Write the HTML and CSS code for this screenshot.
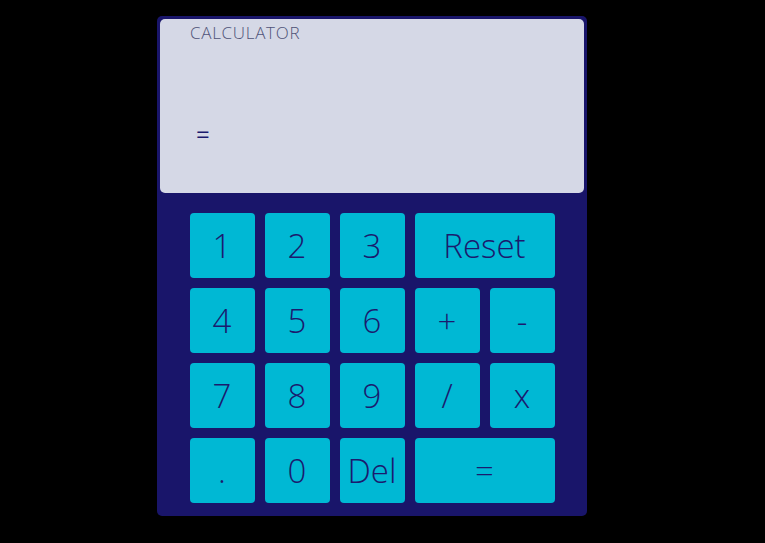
FILE: index.html
```html
<!DOCTYPE html>
<html>
<head>
<meta charset="utf-8">
<link rel="stylesheet" href="styles.css">
</head>
<body>
<div class="calc">
  <div class="display">
    <div class="title">CALCULATOR</div>
    <div class="result">=</div>
  </div>
  <div class="keys">
    <button class="key">1</button>
    <button class="key">2</button>
    <button class="key">3</button>
    <button class="key wide">Reset</button>
    <button class="key">4</button>
    <button class="key">5</button>
    <button class="key">6</button>
    <button class="key">+</button>
    <button class="key">-</button>
    <button class="key">7</button>
    <button class="key">8</button>
    <button class="key">9</button>
    <button class="key">/</button>
    <button class="key">x</button>
    <button class="key">.</button>
    <button class="key">0</button>
    <button class="key">Del</button>
    <button class="key wide">=</button>
  </div>
</div>
</body>
</html>
```
FILE: styles.css
```css
html, body {
  margin: 0;
  padding: 0;
  background: #000;
}
body {
  padding-top: 16px;
  font-family: "Open Sans", "DejaVu Sans", sans-serif;
}
.calc {
  width: 430px;
  margin-left: 157px;
  box-sizing: border-box;
  background: #19156a;
  border-radius: 5px;
  padding: 3px 3px 13px;
}
.display {
  height: 174px;
  box-sizing: border-box;
  background: #d5d8e6;
  border-radius: 5px;
  padding: 2px 30px;
}
.title {
  font-size: 17px;
  line-height: 24px;
  font-weight: 300;
  letter-spacing: 0.7px;
  color: #4f5378;
}
.result {
  margin-top: 74px;
  margin-left: 6px;
  font-size: 24px;
  line-height: 30px;
  color: #1b1a6e;
}
.keys {
  margin-top: 20px;
  display: grid;
  grid-template-columns: repeat(5, 65px);
  grid-auto-rows: 65px;
  gap: 10px;
  justify-content: center;
}
.key {
  border: none;
  margin: 0;
  padding: 0;
  background: #00b8d4;
  border-radius: 4px;
  color: #1b1a6e;
  font-family: "Open Sans", "DejaVu Sans", sans-serif;
  font-size: 33px;
  font-weight: 300;
  line-height: 1;
}
.wide {
  grid-column: span 2;
}
```
